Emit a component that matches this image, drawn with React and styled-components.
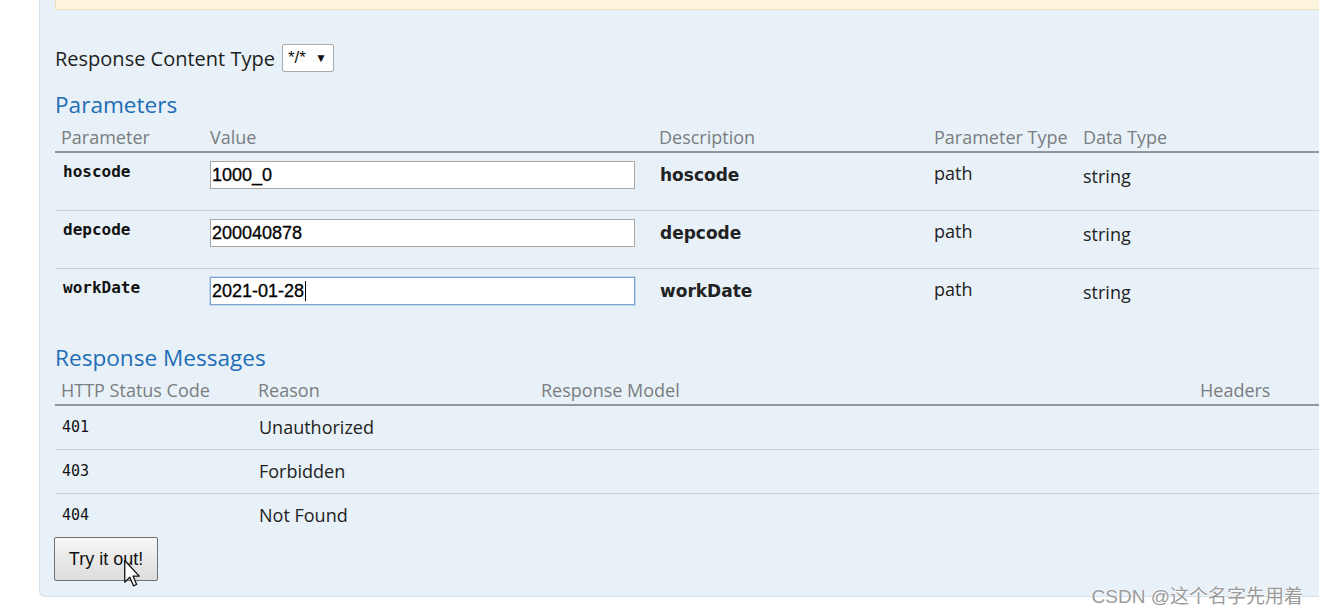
import React from 'react'
import styled, { createGlobalStyle } from 'styled-components'

const GlobalStyle = createGlobalStyle`
  html, body {
    margin: 0;
    padding: 0;
    background: #ffffff;
    overflow: hidden;
  }
  body {
    font-family: "Open Sans", "Noto Sans", sans-serif;
    color: #222;
  }
`

const params = [
  { name: 'hoscode', value: '1000_0', type: 'path', data: 'string' },
  { name: 'depcode', value: '200040878', type: 'path', data: 'string' },
  { name: 'workDate', value: '2021-01-28', type: 'path', data: 'string', focused: true },
]

const messages = [
  { code: '401', reason: 'Unauthorized' },
  { code: '403', reason: 'Forbidden' },
  { code: '404', reason: 'Not Found' },
]

const paramCols = '149px 449px 275px 149px 1fr'
const responseCols = '197px 283px 659px 1fr'

function App() {
  return (
    <>
      <GlobalStyle />
      <Page>
        <Panel>
          <Notice />
          <ContentType>
            <span>Response Content Type</span>
            <Select>
              <span>*/*</span>
              <span className="arrow">▼</span>
            </Select>
          </ContentType>

          <Heading>Parameters</Heading>
          <HeadRow $cols={paramCols}>
            <div>Parameter</div>
            <div>Value</div>
            <div>Description</div>
            <div>Parameter Type</div>
            <div>Data Type</div>
          </HeadRow>
          {params.map((p, i) => (
            <ParamRow key={p.name} $cols={paramCols} $last={i === params.length - 1}>
              <ParamName>{p.name}</ParamName>
              <div>
                <ValueInput $focused={p.focused}>
                  {p.value}
                  {p.focused && <Caret />}
                </ValueInput>
              </div>
              <Desc>{p.name}</Desc>
              <Plain>{p.type}</Plain>
              <Plain $down>{p.data}</Plain>
            </ParamRow>
          ))}

          <Heading $gap>Response Messages</Heading>
          <HeadRow $cols={responseCols}>
            <div>HTTP Status Code</div>
            <div>Reason</div>
            <div>Response Model</div>
            <div>Headers</div>
          </HeadRow>
          {messages.map((m, i) => (
            <MsgRow key={m.code} $cols={responseCols} $last={i === messages.length - 1}>
              <Code>{m.code}</Code>
              <Plain>{m.reason}</Plain>
              <div />
              <div />
            </MsgRow>
          ))}

          <ButtonWrap>
            <TryButton>Try it out!</TryButton>
            <Cursor viewBox="0 0 12 20" width="18" height="29">
              <path
                d="M1 1 L1 16 L4.5 12.6 L7 18.5 L9.2 17.6 L6.7 11.8 L11 11.8 Z"
                fill="#fff"
                stroke="#111"
                strokeWidth="0.9"
                strokeLinejoin="round"
              />
            </Cursor>
          </ButtonWrap>
        </Panel>
        <Watermark>CSDN @这个名字先用着</Watermark>
      </Page>
    </>
  )
}

const Page = styled.div`
  position: relative;
  height: 615px;
  padding-left: 39px;
`

const Panel = styled.div`
  margin-right: -30px;
  background: #e8f1f8;
  border: 1px solid #d3dfe9;
  border-top: none;
  border-bottom-left-radius: 6px;
  padding: 0 0 15px 15px;
`

const Notice = styled.div`
  height: 9px;
  background: #fcf5dc;
  border-left: 1px solid #eee2b8;
  border-bottom: 1px solid #eee2b8;
`

const ContentType = styled.div`
  display: flex;
  align-items: center;
  gap: 7px;
  margin-top: 34px;
  height: 28px;
  font-size: 20px;
  color: #1e1e1e;
`

const Select = styled.div`
  display: flex;
  align-items: center;
  gap: 9px;
  box-sizing: border-box;
  width: 52px;
  height: 28px;
  padding: 0 5px;
  background: #fff;
  border: 1px solid #a9a9a9;
  border-radius: 2px;
  font-family: "Liberation Sans", Arial, sans-serif;
  font-size: 17px;
  color: #111;

  .arrow {
    font-size: 12px;
  }
`

const Heading = styled.h2`
  margin: ${(p) => (p.$gap ? '18px' : '19px')} 0 4px;
  height: 28px;
  line-height: 28px;
  font-size: 22.6px;
  font-weight: 500;
  color: #1e6db6;
`

const HeadRow = styled.div`
  display: grid;
  grid-template-columns: ${(p) => p.$cols};
  border-bottom: 2px solid #8e979f;
  font-size: 18px;
  line-height: 24px;
  color: #7a7d80;

  & > div {
    padding: 2px 6px 2px;
    white-space: nowrap;
  }
`

const ParamRow = styled.div`
  display: grid;
  grid-template-columns: ${(p) => p.$cols};
  height: 57px;
  border-bottom: ${(p) => (p.$last ? 'none' : '1px solid #c9d3dc')};

  & > div {
    padding: 8px 6px 0;
    white-space: nowrap;
  }
`

const ParamName = styled.div`
  font-family: "DejaVu Sans Mono", monospace;
  font-weight: bold;
  font-size: 16px;
  line-height: 22px;
  color: #111;
  && {
    padding-left: 8px;
  }
`

const ValueInput = styled.div`
  box-sizing: border-box;
  display: flex;
  align-items: center;
  width: 425px;
  height: 28px;
  padding: 0 1px;
  background: #fff;
  border: 1px solid ${(p) => (p.$focused ? '#7ea4d4' : '#a7a7a7')};
  box-shadow: ${(p) => (p.$focused ? '0 0 0 1px #c3d6ee' : 'none')};
  font-family: "Liberation Sans", Arial, sans-serif;
  font-size: 18px;
  color: #000;
  -webkit-text-stroke: 0.3px #000;
`

const Caret = styled.span`
  display: inline-block;
  width: 1px;
  height: 20px;
  background: #000;
  margin-left: 1px;
`

const Desc = styled.div`
  font-family: "DejaVu Sans", sans-serif;
  font-weight: bold;
  font-size: 17px;
  line-height: 28px;
  color: #222;
  && {
    padding-left: 7px;
  }
`

const Plain = styled.div`
  font-size: 18px;
  line-height: ${(p) => (p.$down ? '30px' : '24px')};
  color: #222;
`

const MsgRow = styled.div`
  display: grid;
  grid-template-columns: ${(p) => p.$cols};
  height: 43px;
  border-bottom: ${(p) => (p.$last ? 'none' : '1px solid #c9d3dc')};

  & > div {
    padding: 9px 6px 0 7px;
    white-space: nowrap;
  }
`

const Code = styled.div`
  font-family: "DejaVu Sans Mono", monospace;
  font-size: 15px;
  line-height: 24px;
  color: #111;
`

const ButtonWrap = styled.div`
  position: relative;
  width: 104px;
  margin-left: -1px;
`

const TryButton = styled.button`
  box-sizing: border-box;
  width: 104px;
  height: 44px;
  padding: 0;
  background: linear-gradient(#f6f6f6, #dcdcdc);
  border: 1px solid #707070;
  border-radius: 2px;
  font-family: "Liberation Sans", Arial, sans-serif;
  font-size: 18px;
  color: #111;
`

const Cursor = styled.svg`
  position: absolute;
  left: 69px;
  top: 22px;
  pointer-events: none;
`

const Watermark = styled.div`
  position: absolute;
  right: 16px;
  bottom: 7px;
  font-family: "Liberation Sans", "Noto Sans CJK SC", sans-serif;
  font-size: 19px;
  color: #9a9a9a;
  text-shadow: 0 0 2px #fff, 0 0 2px #fff;
`

export default App
